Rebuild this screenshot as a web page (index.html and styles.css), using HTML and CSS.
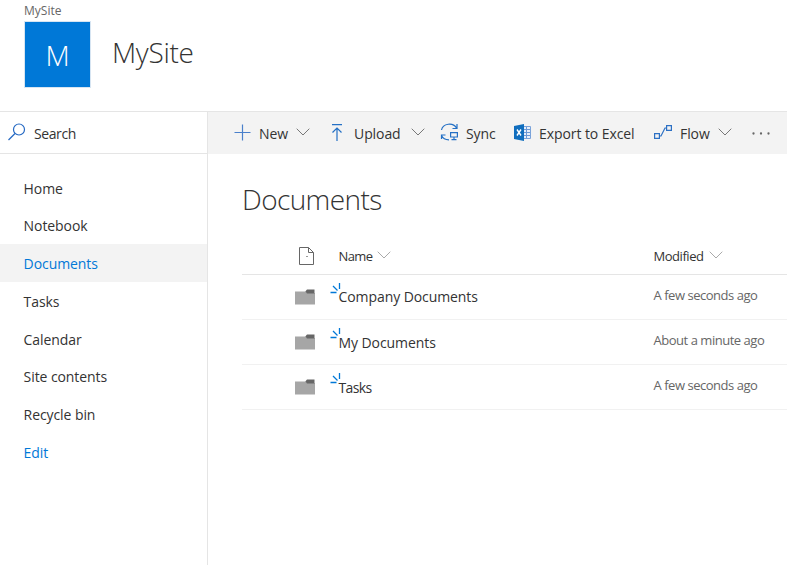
FILE: index.html
```html
<!DOCTYPE html>
<html lang="en">
<head>
<meta charset="utf-8">
<title>MySite - Documents</title>
<link rel="stylesheet" href="styles.css">
</head>
<body>
<svg class="defs" width="0" height="0">
  <symbol id="chevron" viewBox="0 0 14 8"><path d="M.7.7 7 7 13.300.7" fill="none" stroke="currentColor"/></symbol>
  <symbol id="folder" viewBox="0 0 20 16"><path d="M0 2.500H10.500L12 4H20V15.500H0Z" fill="#a6a6a6"/><path d="M12 .5H19.500V4.500H12L10.300 2.500Z" fill="#666"/></symbol>
  <symbol id="glimmer" viewBox="0 0 12 12"><path d="M.5 9.500H6.500M3 3 7.500 7.500M9.500 0V6" fill="none" stroke="#0078d7" stroke-width="1.300"/></symbol>
</svg>
<header class="header">
  <div class="crumb">MySite</div>
  <div class="brand">
    <div class="logo">M</div>
    <h1 class="site-title">MySite</h1>
  </div>
</header>
<div class="shell">
  <aside class="side">
    <div class="search">
      <svg width="18" height="18" viewBox="0 0 18 18" fill="none" stroke="#2569c3" stroke-width="1.200"><circle cx="11" cy="6.500" r="5.500"/><path d="M7 10.500.5 17"/></svg>
      <span>Search</span>
    </div>
    <nav class="nav">
      <a class="nav-item">Home</a>
      <a class="nav-item">Notebook</a>
      <a class="nav-item active">Documents</a>
      <a class="nav-item">Tasks</a>
      <a class="nav-item">Calendar</a>
      <a class="nav-item">Site contents</a>
      <a class="nav-item">Recycle bin</a>
      <a class="nav-item edit">Edit</a>
    </nav>
  </aside>
  <main class="main">
    <div class="commands">
      <div class="cmd new"><svg width="17" height="17" viewBox="0 0 17 17"><path d="M8.500.5V16.500M.5 8.500H16.500" stroke="#4a80cb" stroke-width="1.200"/></svg><span>New</span><svg class="chev"><use href="#chevron"/></svg></div>
      <div class="cmd upload"><svg width="12" height="17" viewBox="0 0 12 17" fill="none" stroke="#2470c5" stroke-width="1.200"><path d="M1 .6H11M6 17V4M1.500 8.500 6 4 10.500 8.500"/></svg><span>Upload</span><svg class="chev"><use href="#chevron"/></svg></div>
      <div class="cmd sync"><svg width="19" height="18" viewBox="0 0 19 18" fill="none" stroke="#2470c5" stroke-width="1.200"><path d="M1.500 7A8 7 0 0 1 16.500 5M17 1V5.500H12.500M1.500 16V12H5.500M1.500 12.500A8 7 0 0 0 9 16.800M10.600 9.600H17.400V14H10.600ZM14 14V16.500M11.500 16.700H16.500"/></svg><span>Sync</span></div>
      <div class="cmd excel"><svg width="17" height="17" viewBox="0 0 17 17"><path d="M9.500 2.500H16.500V14.500H9.500Z" fill="#e6eefa" stroke="#7aa3da"/><path d="M9 5.500H16M9 8.500H16M9 11.500H16M12.500 3V14" stroke="#6c99d6"/><path d="M0 2 10 0V17L0 15Z" fill="#106ebe"/><path d="M3 5.500 7 11.500M7 5.500 3 11.500" stroke="#fff" stroke-width="1.400"/></svg><span>Export to Excel</span></div>
      <div class="cmd flow"><svg width="18" height="14" viewBox="0 0 18 14" fill="none" stroke="#2c70c4" stroke-width="1.200"><path d="M.6 8.600H5.400V13.400H.6ZM12.600.6H17.400V5.400H12.600ZM5.500 11H7L11 3H12.500"/></svg><span>Flow</span><svg class="chev"><use href="#chevron"/></svg></div>
      <svg class="more" width="18" height="3" viewBox="0 0 18 3" fill="#666"><circle cx="1.500" cy="1.500" r="1.150"/><circle cx="9" cy="1.500" r="1.150"/><circle cx="16.500" cy="1.500" r="1.150"/></svg>
    </div>
    <section class="content">
      <h2 class="list-title">Documents</h2>
      <div class="list">
        <div class="row head">
          <div class="type"><svg width="15" height="18" viewBox="0 0 15 18" fill="none" stroke="#666"><path d="M.5.5H9.500L14.500 5.500V17.500H.5ZM9.500.5V5.500H14.500"/><path d="M7.500 9.500H8.500" stroke="#333"/></svg></div>
          <div class="name"><span>Name</span><svg class="chev"><use href="#chevron"/></svg></div>
          <div class="modified"><span>Modified</span><svg class="chev"><use href="#chevron"/></svg></div>
        </div>
        <div class="row">
          <div class="type"><svg class="folder"><use href="#folder"/></svg></div>
          <div class="name"><svg class="glimmer"><use href="#glimmer"/></svg><span>Company Documents</span></div>
          <div class="modified">A few seconds ago</div>
        </div>
        <div class="row lower">
          <div class="type"><svg class="folder"><use href="#folder"/></svg></div>
          <div class="name"><svg class="glimmer"><use href="#glimmer"/></svg><span>My Documents</span></div>
          <div class="modified">About a minute ago</div>
        </div>
        <div class="row lower">
          <div class="type"><svg class="folder"><use href="#folder"/></svg></div>
          <div class="name"><svg class="glimmer"><use href="#glimmer"/></svg><span class="tight">Tasks</span></div>
          <div class="modified">A few seconds ago</div>
        </div>
      </div>
    </section>
  </main>
</div>
</body>
</html>
```

FILE: styles.css
```css
* { box-sizing: border-box; }
body {
  margin: 0;
  height: 565px;
  overflow: hidden;
  display: flex;
  flex-direction: column;
  background: #fff;
  color: #333;
  font: 14px/20px "Segoe UI", "Open Sans", "Noto Sans", sans-serif;
  letter-spacing: -0.08px;
}
svg { flex: none; display: block; }
.defs { position: absolute; }
.header { height: 112px; border-bottom: 1px solid #e5e5e5; padding-left: 24px; flex: none; }
.crumb { height: 21px; line-height: 21px; font-size: 12px; color: #666; letter-spacing: 0; }
.brand { display: flex; gap: 21px; }
.logo {
  width: 67px;
  height: 67px;
  border: 1px solid #d7e5f2;
  background: #0078d7;
  color: #fff;
  font-size: 28px;
  font-weight: 300;
  line-height: 66px;
  text-align: center;
}
.site-title, .list-title { margin: 0; font-size: 28px; font-weight: 300; letter-spacing: -0.3px; }
.site-title { line-height: 63px; }
.shell { flex: 1; display: flex; min-height: 0; }
.side { width: 208px; border-right: 1px solid #e5e5e5; flex: none; }
.search { height: 42px; border-bottom: 1px solid #e5e5e5; display: flex; align-items: center; padding: 0 0 0 8px; gap: 8px; }
.search svg { margin-top: -2px; }
.search span { padding-top: 3px; letter-spacing: -0.4px; }
.nav { padding-top: 14.6px; }
.nav-item { display: block; height: 37.75px; line-height: 39.4px; padding-left: 23.6px; }
.nav-item.active { background: #f3f3f3; color: #0078d7; }
.nav-item.edit { color: #0078d7; }
.main { flex: 1; min-width: 0; }
.commands { height: 42px; background: #f3f3f3; display: flex; align-items: center; padding-left: 26px; }
.cmd { display: flex; align-items: center; height: 42px; flex: none; white-space: nowrap; }
.cmd svg { margin-top: -2px; }
.cmd span { padding-top: 2px; }
.chev { width: 14px; height: 8px; color: #777; }
.new { width: 97px; gap: 8px; }
.upload { width: 109px; gap: 10px; }
.upload span { padding-left: 1px; }
.sync { width: 74px; gap: 7px; }
.excel { width: 140px; gap: 8px; }
.flow { width: 98px; gap: 8px; }
.content { padding-left: 34px; }
.list-title { padding-top: 25px; height: 84px; line-height: 40px; letter-spacing: -0.6px; }
.row { display: flex; height: 45px; border-bottom: 1px solid #f1f1f1; }
.head { height: 37px; border-bottom-color: #e5e5e5; align-items: center; font-size: 13px; }
.type { width: 96.500px; padding-left: 53px; flex: none; }
.head .type { padding-left: 57px; }
.name { width: 315px; flex: none; position: relative; padding-top: 12px; font-size: 14px; }
.lower .name { padding-top: 13px; }
.tight { letter-spacing: -0.6px; }
.head .name, .head .modified { display: flex; align-items: center; gap: 5px; padding-top: 0; font-size: 13px; color: #333; line-height: 20px; letter-spacing: -0.6px; }
.head .modified { letter-spacing: -0.45px; }
.head .chev { color: #aaa; margin-top: -2px; }
.modified { padding-top: 10px; font-size: 13px; color: #666; letter-spacing: -0.47px; white-space: nowrap; }
.folder { width: 20px; height: 16px; margin-top: 14px; }
.glimmer { position: absolute; left: -9px; top: 8px; width: 12px; height: 12px; }
```
